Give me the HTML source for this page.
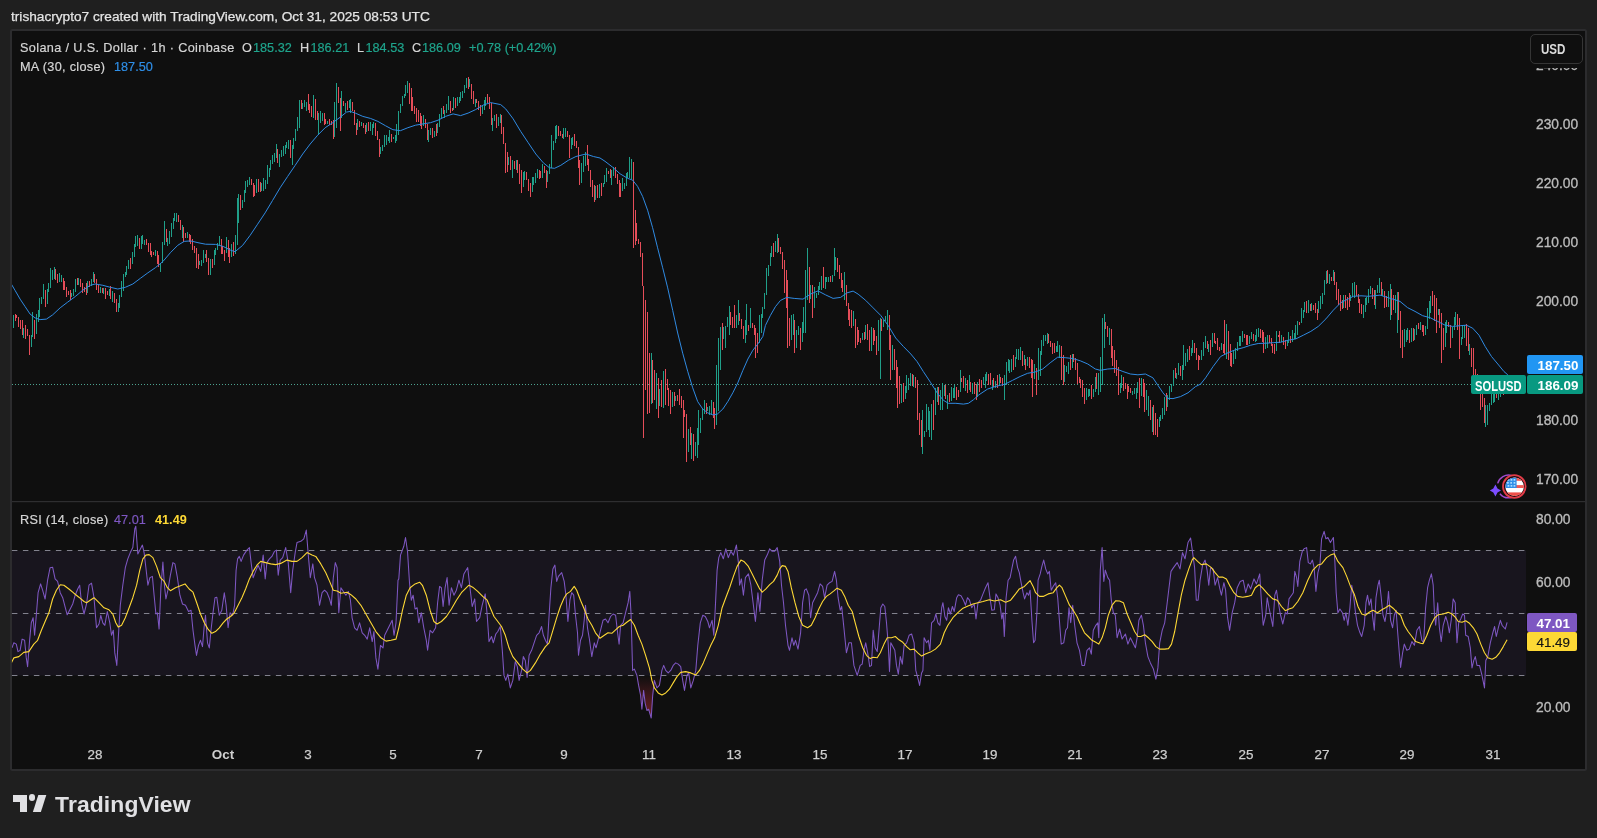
<!DOCTYPE html>
<html><head><meta charset="utf-8"><title>SOLUSD chart</title>
<style>
html,body{margin:0;padding:0}
body{width:1597px;height:838px;overflow:hidden;position:relative;background:#1f1f1f;font-family:"Liberation Sans", sans-serif;}
#chart{position:absolute;left:9.9px;top:29px;width:1573.4px;height:738.1px;border:2px solid #2c2c2e;border-radius:2.5px;background:#0f0f0f}
#t{position:absolute;left:0;top:0;width:1597px;height:838px;will-change:transform}
</style></head><body>
<div id="chart"></div>
<svg width="1597" height="838" viewBox="0 0 1597 838" style="position:absolute;left:0;top:0">
<defs><clipPath id="cm"><rect x="11.9" y="31" width="1514.1" height="470"/></clipPath><clipPath id="cr"><rect x="11.9" y="502.2" width="1514.1" height="238"/></clipPath><linearGradient id="os" gradientUnits="userSpaceOnUse" x1="0" y1="675.5" x2="0" y2="770"><stop offset="0" stop-color="#f23645" stop-opacity="0"/><stop offset="1" stop-color="#f23645" stop-opacity="1"/></linearGradient><clipPath id="below30"><rect x="11" y="676.2" width="1515" height="64"/></clipPath></defs>
<line x1="12" x2="1471" y1="384.5" y2="384.5" stroke="#58bca6" stroke-width="1" stroke-dasharray="1 2" shape-rendering="crispEdges" opacity="0.85"/>
<g clip-path="url(#cm)">
<path d="M13.5 315V328M23.5 328V338M31.5 335V347M32.5 312V337M36.5 314V334M38.5 310V322M39.5 298V317M41.5 297V304M43.5 284V299M47.5 289V304M48.5 283V292M50.5 268V288M52.5 270V280M54.5 267V279M59.5 273V282M61.5 275V282M71.5 293V297M73.5 289V296M75.5 279V292M78.5 278V285M87.5 281V293M91.5 279V286M93.5 272V282M100.5 287V293M103.5 288V294M109.5 289V296M112.5 291V302M118.5 303V312M119.5 295V308M121.5 281V297M123.5 274V291M125.5 272V277M126.5 266V275M128.5 260V269M132.5 252V264M134.5 244V257M135.5 236V247M137.5 235V246M141.5 236V249M142.5 235V244M144.5 240V245M155.5 250V256M160.5 263V272M162.5 242V263M164.5 221V245M167.5 238V246M169.5 231V244M171.5 223V237M173.5 218V229M174.5 213V221M176.5 213V222M182.5 225V238M187.5 232V238M199.5 261V265M201.5 260V266M203.5 250V263M205.5 254V258M210.5 259V275M214.5 250V265M215.5 248V255M217.5 243V250M219.5 236V245M226.5 237V253M231.5 244V257M235.5 235V254M237.5 198V245M238.5 194V223M242.5 200V208M244.5 190V202M245.5 181V193M247.5 180V187M249.5 177V185M256.5 179V193M261.5 183V191M263.5 178V191M265.5 180V189M267.5 165V184M269.5 168V177M270.5 160V170M272.5 155V164M274.5 153V162M276.5 144V158M279.5 154V167M281.5 150V157M283.5 146V156M285.5 145V154M286.5 142V148M288.5 140V149M292.5 145V165M293.5 138V149M295.5 129V141M297.5 117V131M299.5 100V128M302.5 103V109M304.5 100V107M306.5 102V111M313.5 95V118M318.5 113V135M320.5 111V123M322.5 113V121M327.5 121V124M334.5 102V137M336.5 83V128M341.5 91V118M345.5 103V112M349.5 100V108M350.5 99V113M357.5 119V130M361.5 122V126M366.5 123V132M370.5 122V131M372.5 124V135M373.5 122V128M380.5 147V154M382.5 145V151M384.5 135V147M386.5 135V145M388.5 137V141M389.5 130V143M393.5 137V139M395.5 135V143M396.5 124V141M398.5 111V135M400.5 104V113M402.5 96V106M404.5 94V98M405.5 85V96M407.5 81V93M423.5 115V126M428.5 130V142M430.5 128V135M434.5 131V137M437.5 123V133M439.5 114V127M441.5 108V118M444.5 110V118M446.5 104V113M448.5 96V110M453.5 97V110M457.5 97V106M459.5 97V103M460.5 92V101M462.5 91V98M464.5 85V93M466.5 78V88M469.5 79V87M475.5 99V107M482.5 106V114M484.5 100V110M485.5 97V106M492.5 118V131M494.5 115V121M498.5 117V126M500.5 114V123M508.5 157V165M512.5 160V178M516.5 160V170M523.5 172V187M524.5 171V180M532.5 177V192M533.5 177V185M535.5 173V183M537.5 169V178M542.5 164V178M547.5 171V182M549.5 164V174M551.5 135V168M553.5 141V150M555.5 126V143M556.5 125V139M563.5 128V139M565.5 128V137M571.5 138V149M572.5 137V145M581.5 163V183M583.5 156V172M585.5 152V166M595.5 186V200M599.5 184V198M603.5 183V187M604.5 175V184M606.5 168V182M611.5 170V185M613.5 167V176M622.5 178V191M624.5 183V189M626.5 173V186M627.5 172V178M629.5 157V178M631.5 159V179M651.5 353V404M656.5 373V409M659.5 389V406M663.5 371V408M672.5 392V407M675.5 396V401M688.5 429V452M691.5 433V459M695.5 442V456M697.5 428V458M698.5 410V445M700.5 418V433M702.5 408V420M704.5 400V414M707.5 407V411M709.5 406V415M711.5 400V415M716.5 365V425M718.5 338V411M720.5 327V370M723.5 327V339M725.5 326V348M727.5 317V327M729.5 306V335M736.5 315V328M738.5 300V325M745.5 320V343M746.5 304V335M750.5 308V328M759.5 315V343M761.5 314V333M762.5 307V318M764.5 293V309M766.5 268V295M768.5 265V276M770.5 253V266M771.5 246V257M775.5 241V252M777.5 234V253M791.5 315V340M793.5 314V335M796.5 330V348M798.5 326V335M802.5 322V342M803.5 307V333M805.5 270V333M807.5 248V300M810.5 285V299M814.5 287V308M816.5 293V298M818.5 286V295M819.5 282V290M821.5 276V290M825.5 277V289M826.5 277V282M828.5 277V282M832.5 275V282M834.5 248V276M835.5 257V270M844.5 272V300M853.5 311V326M862.5 333V340M865.5 325V339M871.5 327V351M878.5 320V351M880.5 318V379M883.5 320V327M885.5 316V321M887.5 310V330M892.5 345V370M901.5 384V403M905.5 386V399M906.5 375V393M908.5 378V390M910.5 373V386M913.5 375V387M922.5 410V454M924.5 431V437M926.5 404V432M928.5 407V430M929.5 411V437M931.5 404V440M935.5 388V415M937.5 387V402M940.5 390V410M942.5 383V410M944.5 385V396M947.5 395V409M951.5 387V401M953.5 388V398M954.5 385V398M960.5 370V392M965.5 378V391M969.5 375V390M972.5 383V394M977.5 382V397M983.5 377V385M985.5 374V388M986.5 372V381M992.5 380V390M995.5 381V388M999.5 374V385M1004.5 375V400M1006.5 362V385M1008.5 359V371M1009.5 360V373M1011.5 359V372M1015.5 357V367M1016.5 349V359M1018.5 349V360M1020.5 347V360M1024.5 355V365M1027.5 357V366M1034.5 364V379M1038.5 348V380M1040.5 351V376M1041.5 340V355M1043.5 335V346M1045.5 335V341M1047.5 333V344M1056.5 346V352M1057.5 341V352M1059.5 345V358M1064.5 365V382M1066.5 366V372M1068.5 362V374M1072.5 354V368M1086.5 388V400M1088.5 389V397M1089.5 389V396M1093.5 389V397M1095.5 377V392M1098.5 373V395M1100.5 357V392M1102.5 318V385M1104.5 314V348M1109.5 328V345M1120.5 383V393M1121.5 375V388M1132.5 391V395M1134.5 388V394M1136.5 388V399M1137.5 382V393M1141.5 378V396M1146.5 390V410M1148.5 396V416M1152.5 407V432M1159.5 417V427M1160.5 415V421M1162.5 408V419M1164.5 397V415M1167.5 395V407M1169.5 386V400M1171.5 384V392M1173.5 370V386M1176.5 373V379M1178.5 363V375M1182.5 365V380M1183.5 345V370M1185.5 353V366M1187.5 349V362M1191.5 348V356M1192.5 340V353M1201.5 350V360M1203.5 342V356M1205.5 336V348M1208.5 344V352M1212.5 333V347M1221.5 343V350M1226.5 324V359M1233.5 350V364M1235.5 348V359M1237.5 342V351M1239.5 336V346M1240.5 336V346M1242.5 331V342M1249.5 336V344M1251.5 332V339M1255.5 335V342M1256.5 329V341M1258.5 328V337M1265.5 337V349M1267.5 335V348M1276.5 331V351M1281.5 335V342M1287.5 340V346M1288.5 332V343M1292.5 330V342M1294.5 333V339M1295.5 325V339M1297.5 321V335M1301.5 308V323M1303.5 310V318M1304.5 302V312M1308.5 300V313M1311.5 303V311M1318.5 301V313M1320.5 296V309M1322.5 293V304M1324.5 280V295M1326.5 271V284M1329.5 274V284M1333.5 270V281M1343.5 295V308M1350.5 295V301M1352.5 283V297M1354.5 282V298M1363.5 305V318M1365.5 298V312M1366.5 297V305M1368.5 289V303M1370.5 286V294M1375.5 290V309M1377.5 285V293M1379.5 278V293M1382.5 289V296M1388.5 291V307M1390.5 284V320M1395.5 295V313M1397.5 292V333M1404.5 329V347M1406.5 330V342M1407.5 328V340M1411.5 328V342M1414.5 329V340M1416.5 325V335M1420.5 322V330M1425.5 326V335M1427.5 308V329M1429.5 301V319M1430.5 296V313M1438.5 309V315M1445.5 322V347M1446.5 320V333M1452.5 327V338M1454.5 317V330M1455.5 312V325M1461.5 337V345M1462.5 325V339M1464.5 325V338M1469.5 344V355M1485.5 405V427M1487.5 405V425M1489.5 403V411M1491.5 394V405M1493.5 391V403M1494.5 389V402M1498.5 391V400M1500.5 388V397M1501.5 385V393M1505.5 381V393M1507.5 383V391" stroke="#22ab94" stroke-width="1" fill="none" shape-rendering="crispEdges" opacity="0.92"/><path d="M15.5 314V321M16.5 315V318M18.5 317V327M20.5 320V329M22.5 320V335M25.5 325V339M27.5 329V336M29.5 335V355M34.5 320V339M45.5 290V307M55.5 269V280M57.5 274V283M63.5 278V290M64.5 281V290M66.5 287V297M68.5 291V295M70.5 290V300M77.5 278V285M80.5 279V287M82.5 283V293M84.5 287V292M86.5 283V295M89.5 281V287M94.5 274V283M96.5 279V290M98.5 285V293M102.5 288V293M105.5 288V299M107.5 291V295M110.5 286V299M114.5 293V303M116.5 299V312M130.5 258V269M139.5 238V249M146.5 239V245M148.5 243V252M150.5 243V255M151.5 251V257M153.5 252V255M157.5 251V264M158.5 255V267M166.5 229V242M178.5 215V222M180.5 220V230M183.5 227V242M185.5 233V238M189.5 234V242M190.5 235V244M192.5 239V250M194.5 246V253M196.5 248V268M198.5 254V269M206.5 250V262M208.5 258V275M212.5 259V268M221.5 239V254M222.5 246V254M224.5 250V261M228.5 240V257M229.5 248V263M233.5 242V256M240.5 195V210M251.5 179V185M253.5 183V197M254.5 185V196M258.5 179V192M260.5 182V192M277.5 149V163M290.5 140V158M301.5 100V109M308.5 94V110M309.5 104V113M311.5 106V117M315.5 99V120M317.5 111V120M324.5 113V125M325.5 119V124M329.5 119V125M331.5 121V125M333.5 120V139M338.5 87V103M340.5 98V131M343.5 101V106M347.5 101V110M352.5 102V111M354.5 110V125M356.5 123V135M359.5 121V127M363.5 123V128M365.5 125V134M368.5 122V131M375.5 123V136M377.5 131V140M379.5 139V157M391.5 134V142M409.5 83V104M411.5 88V111M412.5 97V111M414.5 106V114M416.5 108V122M418.5 110V122M420.5 113V126M421.5 116V129M425.5 119V128M427.5 124V140M432.5 128V138M436.5 124V136M443.5 106V114M450.5 101V113M452.5 108V111M455.5 98V108M468.5 77V89M471.5 84V99M473.5 91V104M476.5 99V103M478.5 101V110M480.5 105V116M487.5 94V103M489.5 97V109M491.5 103V125M496.5 114V128M501.5 115V134M503.5 127V144M505.5 143V173M507.5 152V172M510.5 156V170M514.5 161V169M517.5 160V173M519.5 164V184M521.5 170V193M526.5 172V180M528.5 179V191M530.5 183V197M539.5 170V179M540.5 171V178M544.5 166V173M546.5 170V188M558.5 126V136M560.5 131V136M562.5 134V138M567.5 131V137M569.5 135V158M574.5 134V146M576.5 141V148M578.5 147V168M579.5 160V185M587.5 145V165M588.5 159V171M590.5 170V187M592.5 180V197M594.5 185V202M597.5 185V198M601.5 183V196M608.5 171V174M610.5 169V178M615.5 167V178M617.5 174V184M619.5 180V197M620.5 183V197M633.5 162V248M635.5 210V245M636.5 223V241M638.5 239V244M640.5 242V257M642.5 253V286M643.5 286V438M645.5 300V390M647.5 312V414M649.5 353V413M652.5 360V403M654.5 370V400M658.5 378V418M661.5 380V407M665.5 369V405M667.5 379V390M668.5 388V406M670.5 390V414M674.5 392V406M677.5 395V401M679.5 389V405M681.5 396V408M683.5 400V438M684.5 410V417M686.5 414V462M690.5 427V445M693.5 434V461M706.5 403V414M713.5 402V418M714.5 408V429M722.5 323V350M730.5 312V325M732.5 317V328M734.5 305V328M739.5 313V321M741.5 319V329M743.5 326V339M748.5 325V331M752.5 323V328M754.5 325V335M755.5 328V358M757.5 333V353M773.5 243V257M778.5 238V252M780.5 247V254M782.5 252V269M784.5 260V293M786.5 270V308M787.5 280V348M789.5 318V346M794.5 320V353M800.5 328V350M809.5 267V303M812.5 285V318M823.5 267V288M830.5 276V282M837.5 258V272M839.5 265V279M841.5 273V288M842.5 280V292M846.5 285V306M848.5 303V320M849.5 309V326M851.5 310V328M855.5 319V348M857.5 327V345M858.5 330V342M860.5 338V343M864.5 332V340M867.5 324V340M869.5 330V351M873.5 328V345M874.5 330V341M876.5 336V355M881.5 319V331M889.5 315V350M890.5 335V380M894.5 349V370M896.5 360V388M897.5 367V408M899.5 376V404M903.5 383V402M912.5 374V386M915.5 377V388M917.5 380V420M919.5 413V435M921.5 420V447M933.5 400V430M938.5 387V405M945.5 385V399M949.5 393V402M956.5 387V400M958.5 390V397M961.5 378V382M963.5 376V388M967.5 380V393M970.5 382V392M974.5 382V394M976.5 384V400M979.5 379V392M981.5 380V388M988.5 374V385M990.5 373V385M993.5 378V387M997.5 375V388M1000.5 377V383M1002.5 378V386M1013.5 355V370M1022.5 351V366M1025.5 359V370M1029.5 357V368M1031.5 359V378M1032.5 360V397M1036.5 368V395M1048.5 334V343M1050.5 341V347M1052.5 343V354M1054.5 343V353M1061.5 346V380M1063.5 355V385M1070.5 355V370M1073.5 354V362M1075.5 358V370M1077.5 363V384M1079.5 377V383M1080.5 379V388M1082.5 380V397M1084.5 388V404M1091.5 385V399M1096.5 373V389M1105.5 322V329M1107.5 326V337M1111.5 329V358M1112.5 346V366M1114.5 350V373M1116.5 360V376M1118.5 367V395M1123.5 377V391M1125.5 383V389M1127.5 384V399M1128.5 386V392M1130.5 388V393M1139.5 378V408M1143.5 379V397M1144.5 383V412M1150.5 400V420M1153.5 405V435M1155.5 413V435M1157.5 419V437M1166.5 393V411M1175.5 368V378M1180.5 366V376M1189.5 346V360M1194.5 343V353M1196.5 348V360M1198.5 355V370M1199.5 356V360M1207.5 341V349M1210.5 340V355M1214.5 333V343M1215.5 341V344M1217.5 338V350M1219.5 347V351M1223.5 344V353M1224.5 320V355M1228.5 331V360M1230.5 344V366M1231.5 353V367M1244.5 334V338M1246.5 335V345M1247.5 335V345M1253.5 334V341M1260.5 329V338M1262.5 330V342M1263.5 332V353M1269.5 335V343M1271.5 338V346M1272.5 344V353M1274.5 344V354M1278.5 335V337M1279.5 331V343M1283.5 337V345M1285.5 340V349M1290.5 336V343M1299.5 322V325M1306.5 301V313M1310.5 304V311M1313.5 305V310M1315.5 303V313M1317.5 309V320M1327.5 270V283M1331.5 277V281M1334.5 272V285M1336.5 282V300M1338.5 289V305M1340.5 295V311M1342.5 300V309M1345.5 295V308M1347.5 297V310M1349.5 293V307M1356.5 285V296M1358.5 294V303M1359.5 299V313M1361.5 304V314M1372.5 288V299M1374.5 290V305M1381.5 282V296M1384.5 291V308M1386.5 296V307M1391.5 289V315M1393.5 295V310M1398.5 292V320M1400.5 311V348M1402.5 330V358M1409.5 330V343M1413.5 328V341M1418.5 323V329M1422.5 325V332M1423.5 325V336M1432.5 291V306M1434.5 295V321M1436.5 298V333M1439.5 309V328M1441.5 313V363M1443.5 328V350M1448.5 322V327M1450.5 325V348M1457.5 314V330M1459.5 318V359M1466.5 324V346M1468.5 328V351M1471.5 348V367M1473.5 348V375M1475.5 369V379M1477.5 374V382M1478.5 380V393M1480.5 391V410M1482.5 394V407M1484.5 398V423M1496.5 394V398M1503.5 385V395" stroke="#f7525f" stroke-width="1" fill="none" shape-rendering="crispEdges" opacity="0.92"/>
<path d="M11.3 284.0L15.0 290.3L20.1 299.1L25.1 306.6L30.1 314.1L35.1 317.9L40.1 319.6L46.4 319.1L52.6 314.9L60.2 307.8L67.7 302.1L75.2 296.6L82.7 290.3L90.2 285.3L95.2 284.0L102.8 285.3L110.3 287.3L117.8 289.0L125.3 287.3L132.8 284.0L140.4 278.3L147.9 272.8L155.4 267.7L162.9 261.5L170.4 252.7L177.9 245.2L184.2 241.4L190.5 240.9L198.0 242.7L205.5 244.2L215.5 244.4L223.1 246.4L230.6 250.2L235.0 251.7L242.5 245.5L250.1 235.4L257.6 224.2L265.1 212.9L272.6 200.4L280.1 187.8L287.6 176.5L295.2 165.3L302.7 154.0L310.2 144.0L317.7 135.2L325.2 127.7L332.8 122.7L340.3 117.1L346.5 112.1L350.3 111.4L355.3 113.1L362.8 116.4L370.4 118.4L377.9 121.4L385.4 125.7L392.9 129.7L400.4 130.7L407.9 127.7L415.5 125.2L423.0 123.9L430.5 122.7L438.0 120.2L445.5 116.4L453.1 113.9L460.6 115.6L468.1 113.1L475.6 109.6L483.1 105.1L490.7 102.6L500.7 104.6L505.7 108.9L513.2 118.9L520.7 131.4L528.2 142.7L535.8 154.0L543.3 162.8L549.5 167.8L554.6 168.3L560.8 165.3L568.3 160.3L575.9 156.5L585.9 154.0L593.4 156.5L600.0 158.0L605.0 161.3L612.5 167.1L620.1 173.8L627.6 178.3L632.6 180.1L637.6 186.4L642.6 196.4L647.6 210.2L652.6 227.7L657.6 247.8L662.7 267.8L667.7 287.9L672.7 310.4L677.7 333.0L682.7 353.2L687.7 371.3L692.7 387.8L697.7 401.6L702.8 409.1L707.8 412.9L712.8 414.9L717.3 414.1L722.8 409.1L727.8 401.6L732.8 392.8L737.8 382.8L742.9 370.3L747.9 359.0L752.9 350.2L757.9 343.9L762.9 336.4L765.4 325.5L770.4 315.4L775.4 306.7L780.5 300.4L786.7 297.4L794.2 298.4L803.0 299.1L810.5 294.1L818.0 290.9L825.6 294.9L833.1 298.4L840.6 297.4L846.9 292.9L853.1 291.1L858.1 294.1L865.7 300.4L873.2 307.9L880.7 315.4L888.2 325.5L895.7 338.0L903.3 346.4L910.8 354.0L917.0 361.5L923.3 371.5L930.8 382.8L937.1 392.8L943.4 400.3L948.4 403.3L955.9 403.3L963.4 404.1L968.4 403.3L973.4 399.8L978.4 395.3L980.0 394.1L987.5 389.1L995.0 386.6L1005.1 384.1L1012.6 380.3L1020.1 376.5L1027.6 373.3L1035.1 372.0L1042.7 369.0L1050.2 362.8L1057.7 357.2L1065.2 357.7L1072.7 358.5L1080.3 360.8L1087.8 364.0L1095.3 369.0L1100.3 370.3L1107.8 369.0L1115.3 368.5L1122.9 371.5L1130.4 374.0L1137.9 374.8L1145.4 374.0L1152.9 377.8L1157.9 385.3L1163.0 392.8L1167.5 398.3L1173.0 398.6L1180.5 396.6L1188.0 392.8L1195.5 386.6L1200.6 384.1L1205.6 377.8L1213.1 366.5L1220.6 356.5L1228.1 352.7L1235.6 349.7L1243.2 347.7L1250.7 345.2L1258.2 343.5L1265.7 343.2L1273.2 342.7L1280.8 342.2L1288.3 340.2L1295.8 338.9L1303.3 335.2L1310.8 331.4L1318.3 326.4L1325.9 318.9L1333.4 310.1L1340.9 302.6L1348.4 298.8L1353.4 296.3L1361.0 295.8L1368.5 296.3L1376.0 295.6L1380.0 295.1L1400.0 301.4L1407.5 307.6L1415.0 311.4L1422.6 315.7L1430.1 317.7L1437.6 321.4L1445.1 325.2L1452.6 326.4L1460.2 325.7L1466.4 325.2L1472.7 328.2L1479.0 335.2L1485.2 346.5L1491.5 356.5L1497.8 364.0L1504.0 371.6L1507.8 374.8" stroke="#2f8ae2" stroke-width="1" fill="none" stroke-linejoin="round"/>
</g>
<rect x="11.9" y="501" width="1573.4" height="1.2" fill="#2e2e30"/>
<rect x="11.9" y="550.5" width="1514.1" height="125" fill="#7e57c2" fill-opacity="0.09"/>
<line x1="11.9" x2="1526" y1="550.5" y2="550.5" stroke="#82828e" stroke-width="1" stroke-dasharray="5.5 5.5"/>
<line x1="11.9" x2="1526" y1="613.5" y2="613.5" stroke="#82828e" stroke-width="1" stroke-dasharray="5.5 5.5"/>
<line x1="11.9" x2="1526" y1="675.5" y2="675.5" stroke="#82828e" stroke-width="1" stroke-dasharray="5.5 5.5"/>
<g clip-path="url(#cr)">
<g clip-path="url(#below30)"><path d="M12.0 647.9L13.8 642.8L16.3 644.1L18.0 651.6L20.1 650.4L22.1 639.1L24.6 640.3L26.3 657.9L27.6 666.7L29.6 640.3L31.3 622.8L33.1 617.8L34.6 635.3L36.3 615.3L38.1 592.7L40.6 583.9L42.6 590.2L45.1 599.0L47.6 580.2L50.1 567.7L52.6 567.2L55.1 578.9L57.6 581.4L60.2 592.7L62.7 597.7L64.7 605.3L67.2 614.8L70.2 609.0L72.7 604.0L75.2 595.2L77.7 589.0L79.7 585.2L81.5 602.7L84.0 614.0L86.5 604.0L89.0 585.2L91.5 583.2L94.0 597.7L96.5 627.8L99.0 624.0L100.8 615.3L102.8 622.8L104.8 625.3L107.3 611.5L109.8 622.8L111.5 635.3L113.3 630.3L114.8 652.9L116.8 665.4L118.3 637.8L120.3 605.3L122.8 585.2L125.3 567.7L127.8 558.9L130.3 552.6L132.8 547.6L134.8 528.8L135.8 526.3L137.8 553.9L140.4 548.9L142.4 545.1L144.1 552.6L145.9 567.7L147.9 585.2L149.9 577.7L152.4 576.4L154.1 595.2L155.9 614.0L157.4 612.8L159.1 629.1L160.9 587.7L162.9 562.1L164.4 585.2L165.9 599.0L167.9 590.2L170.4 575.2L172.9 562.6L174.9 563.9L177.4 577.7L179.9 595.2L182.5 604.0L185.5 605.3L188.5 611.5L191.0 610.3L193.0 630.3L195.0 645.4L196.5 655.4L198.5 645.4L200.5 640.3L202.5 646.6L204.3 625.3L205.5 615.3L207.5 642.8L209.3 647.9L211.0 630.3L213.0 612.8L215.0 597.7L216.8 597.2L219.3 615.3L221.8 610.3L224.3 592.7L226.1 605.3L228.1 627.8L230.1 612.8L232.6 615.3L234.6 605.3L236.1 570.2L237.6 558.9L239.3 556.4L241.1 561.4L243.6 555.1L246.9 550.1L249.4 547.6L251.1 562.6L253.1 577.7L255.6 571.4L258.1 565.2L260.7 571.4L263.2 555.1L265.2 578.9L266.9 562.6L269.4 558.9L271.9 556.4L274.4 551.4L276.4 550.1L278.2 575.2L280.2 560.1L282.7 557.6L285.7 547.6L288.2 562.6L290.7 592.7L292.7 570.2L295.2 552.6L297.0 542.6L300.8 541.3L303.8 538.8L306.3 530.1L308.3 555.1L310.3 577.7L312.8 563.9L314.5 577.7L317.0 585.2L319.5 605.3L322.1 592.7L324.6 590.2L327.1 592.7L329.6 599.0L331.3 605.3L333.3 577.7L335.3 562.6L337.1 567.7L338.8 612.8L340.9 587.7L343.4 591.5L345.9 595.2L348.4 591.5L350.4 600.2L352.1 617.8L354.6 627.8L357.1 630.3L359.6 622.8L362.2 632.8L364.7 635.3L367.2 639.1L369.7 627.8L372.2 641.6L373.9 631.6L375.9 657.9L377.9 669.2L380.5 645.4L383.0 647.9L384.7 635.3L387.2 630.3L389.7 625.3L392.2 620.3L394.0 635.3L396.0 622.8L398.0 580.2L398.8 578.9L400.5 555.1L403.8 546.3L405.5 537.5L407.5 551.3L409.5 582.7L411.3 600.2L413.1 595.2L415.1 609.0L417.1 607.7L418.8 622.8L421.3 612.7L423.8 627.8L426.3 640.3L427.6 650.3L430.1 630.3L432.6 632.8L435.6 627.8L437.6 602.7L439.6 586.4L441.4 587.7L443.1 606.5L445.1 587.7L447.1 577.6L449.1 605.2L451.4 587.7L453.9 595.2L456.4 590.2L458.9 580.2L461.4 587.7L463.9 573.9L467.7 567.6L469.7 585.2L472.2 606.5L474.7 598.9L476.5 621.5L479.7 617.7L482.2 605.2L485.2 593.9L487.2 615.2L489.0 641.6L491.5 636.5L493.3 642.8L495.8 634.0L497.8 631.5L500.3 626.5L502.3 650.3L504.0 675.4L505.8 680.4L507.8 674.1L510.3 687.9L512.8 680.4L515.3 661.6L517.3 666.6L519.1 680.4L521.6 670.4L523.3 656.6L525.3 660.4L527.1 677.4L529.1 655.3L531.6 650.3L534.1 642.8L536.6 635.3L539.1 632.8L541.6 626.5L543.4 635.3L545.4 640.3L547.4 644.1L549.1 615.2L550.9 587.7L552.9 568.9L554.9 565.1L556.7 581.4L558.4 576.4L561.7 572.6L564.2 581.4L565.9 595.2L567.9 621.5L569.9 600.2L571.7 592.7L573.7 595.2L575.5 615.2L577.5 632.8L578.5 655.3L580.5 640.3L582.5 635.3L584.2 620.3L585.5 605.2L587.5 627.8L589.2 637.8L591.8 656.6L594.3 642.8L596.0 647.8L598.0 640.3L600.5 630.3L603.0 620.3L605.5 619.0L608.0 622.8L610.6 616.5L613.1 614.0L615.6 615.2L617.6 632.8L619.1 644.1L620.6 625.3L623.1 622.8L625.6 612.7L628.1 602.7L629.8 591.4L631.1 615.2L632.6 670.4L634.4 669.1L636.9 675.4L638.6 685.4L640.6 695.4L641.9 709.2L643.6 690.4L645.1 703.0L646.9 710.5L648.6 709.2L651.2 718.0L652.7 695.4L654.4 680.4L656.9 687.9L659.4 685.4L661.9 670.4L663.7 665.4L665.7 670.4L668.2 672.9L670.7 670.4L673.2 665.4L675.7 662.9L678.2 664.1L680.7 666.6L682.7 680.4L684.5 690.4L687.0 675.4L688.7 672.9L690.8 687.9L693.3 680.4L695.8 670.4L697.8 645.3L700.3 622.8L702.8 615.2L705.3 616.5L707.8 621.5L709.5 627.8L712.1 620.3L713.8 635.3L715.3 607.7L717.1 570.1L718.8 557.6L720.8 552.6L723.3 558.8L725.8 548.8L728.3 557.6L730.9 551.3L733.4 555.1L736.4 545.1L738.4 562.6L739.6 585.2L741.4 578.9L743.4 595.2L745.4 577.6L748.4 573.9L750.9 585.2L753.4 605.2L755.4 621.5L757.9 592.7L759.9 611.5L762.2 580.2L764.7 560.1L767.2 555.1L769.7 548.8L772.2 551.3L774.7 551.3L777.2 547.6L779.7 561.4L781.5 585.2L783.5 602.7L785.5 625.3L788.0 645.3L789.5 650.3L792.0 637.8L793.8 645.3L795.5 640.3L798.0 649.1L800.6 632.8L802.6 602.7L804.6 590.2L806.3 588.9L808.8 595.2L810.6 617.7L812.6 602.7L815.1 597.7L817.6 592.7L820.1 583.9L822.6 586.4L824.6 597.7L827.1 585.2L829.6 582.7L832.1 581.4L834.6 571.4L836.4 580.2L838.1 597.7L840.2 610.2L841.7 606.5L843.9 627.8L846.4 652.8L848.9 642.8L851.4 642.8L853.9 665.4L857.2 675.4L860.2 665.4L862.2 664.1L864.0 650.3L865.7 642.8L867.7 652.8L869.7 666.6L871.5 665.4L873.2 630.3L875.2 647.8L877.2 651.6L879.0 630.3L880.8 607.7L882.8 604.0L884.8 606.5L886.5 622.8L888.3 645.3L889.5 671.6L890.8 642.8L892.8 646.6L894.8 650.3L896.5 665.4L898.3 674.1L900.3 656.6L902.3 664.1L904.1 645.3L906.6 642.8L909.1 635.3L911.6 634.0L914.1 642.8L915.8 670.4L917.8 677.9L919.6 685.4L921.6 672.9L922.9 670.4L924.1 637.8L926.6 642.8L928.4 640.3L929.9 650.3L931.6 622.8L934.1 620.3L935.9 614.0L937.9 622.8L939.9 625.3L941.7 607.7L942.9 602.7L944.9 616.5L946.7 620.3L948.4 607.7L950.4 614.0L952.4 606.5L954.2 611.5L956.7 597.7L958.4 594.7L961.0 595.7L963.5 600.2L965.5 605.2L967.5 597.7L969.5 600.2L971.7 607.7L974.2 604.0L976.0 619.0L978.0 602.7L980.5 600.2L983.0 593.9L985.5 587.7L988.0 582.7L990.0 597.7L991.8 610.2L994.3 609.7L996.0 593.9L998.0 597.7L1000.1 605.2L1001.8 619.0L1003.1 612.7L1004.3 636.5L1006.1 597.7L1008.1 580.2L1010.1 577.6L1011.8 568.9L1013.6 560.1L1015.6 556.3L1017.6 567.6L1019.3 572.6L1021.1 582.7L1023.1 592.7L1024.6 598.9L1026.9 592.7L1028.6 595.2L1030.1 590.2L1031.9 620.3L1033.6 642.8L1035.1 640.3L1036.9 612.7L1038.1 580.2L1040.2 573.9L1041.9 566.4L1043.7 560.1L1045.7 568.9L1047.7 573.9L1049.4 571.4L1051.2 590.2L1053.2 586.4L1055.7 582.7L1057.7 597.7L1059.4 620.3L1061.2 644.1L1063.7 642.8L1065.7 630.3L1067.5 627.8L1069.0 607.7L1070.7 622.8L1072.7 605.2L1074.5 624.0L1077.0 642.8L1079.5 650.3L1082.0 665.4L1084.5 665.4L1087.0 650.3L1089.5 647.8L1091.3 654.1L1093.3 630.3L1095.8 625.3L1097.8 622.8L1098.8 637.8L1100.3 570.1L1102.1 547.6L1103.8 581.4L1105.3 570.1L1107.8 577.6L1109.6 580.2L1111.3 600.2L1113.3 612.7L1115.3 615.2L1117.1 637.8L1119.6 629.0L1122.1 639.0L1125.4 634.0L1127.9 644.1L1130.4 637.8L1132.9 642.8L1135.4 647.8L1137.1 637.8L1138.9 620.3L1141.4 615.2L1143.4 625.3L1145.4 642.8L1147.9 656.6L1150.4 662.9L1153.4 669.1L1155.9 679.1L1157.9 667.9L1159.7 642.8L1162.2 630.3L1164.7 622.8L1167.2 602.7L1169.0 587.7L1171.0 571.4L1173.5 567.6L1177.2 562.6L1180.0 568.9L1182.5 552.6L1185.0 558.8L1188.0 542.6L1190.6 538.0L1192.6 552.6L1194.6 567.6L1196.3 600.2L1198.1 600.2L1200.1 580.2L1202.6 565.1L1205.1 560.1L1207.1 570.1L1208.8 585.2L1210.6 567.6L1213.1 568.9L1215.1 585.2L1217.6 577.6L1219.6 587.7L1221.4 595.2L1223.9 582.7L1225.6 590.2L1227.6 617.7L1229.6 630.3L1232.2 612.7L1234.7 602.7L1237.2 587.7L1240.2 581.4L1243.2 580.2L1245.7 592.7L1248.2 583.9L1250.7 588.9L1254.0 578.9L1256.5 583.9L1259.7 573.9L1261.5 602.7L1263.2 625.3L1265.7 615.2L1267.2 597.7L1269.0 607.7L1270.8 616.5L1272.8 626.5L1274.8 595.2L1276.5 590.2L1278.3 602.7L1280.3 614.0L1282.8 624.0L1285.3 612.7L1287.3 614.0L1289.0 598.9L1291.6 595.2L1293.3 592.7L1294.8 571.4L1296.6 577.6L1297.8 586.4L1299.8 561.4L1302.3 551.3L1304.1 548.8L1306.6 547.6L1308.3 562.6L1310.4 563.9L1312.4 560.1L1314.1 567.6L1315.9 591.4L1317.9 572.6L1319.9 565.1L1321.6 538.8L1324.1 531.3L1325.9 538.8L1327.9 537.5L1330.4 542.6L1333.4 537.5L1334.9 562.6L1336.2 592.7L1337.9 612.7L1339.9 609.0L1342.4 612.7L1344.2 620.3L1345.9 612.7L1347.9 625.3L1349.9 607.7L1351.7 585.2L1353.5 595.2L1355.5 612.7L1357.5 625.3L1360.0 632.8L1361.7 636.5L1364.2 625.3L1366.0 602.7L1367.5 595.2L1369.2 605.2L1371.0 598.9L1372.5 615.2L1374.3 630.3L1376.0 597.7L1378.0 585.2L1379.3 580.2L1381.0 595.2L1383.0 615.2L1385.0 621.5L1386.8 610.2L1388.5 591.4L1390.6 620.3L1392.6 627.8L1394.3 615.2L1396.1 610.2L1397.6 631.5L1399.3 652.8L1400.6 667.4L1402.6 652.8L1404.3 644.1L1406.8 650.3L1409.3 649.1L1411.9 641.6L1414.4 645.3L1416.9 630.3L1419.4 626.5L1421.9 640.3L1423.6 642.8L1425.6 607.7L1427.6 587.7L1429.4 580.2L1431.4 573.9L1433.2 585.2L1434.4 612.7L1435.7 625.3L1437.7 602.7L1439.4 627.8L1441.2 641.6L1443.2 625.3L1445.7 616.5L1447.7 622.8L1449.4 632.8L1451.2 620.3L1453.2 598.9L1455.2 602.7L1457.0 642.8L1458.7 622.8L1460.7 619.0L1462.7 614.0L1464.5 615.2L1465.7 635.3L1468.2 636.5L1470.3 647.8L1472.0 667.9L1473.8 660.4L1475.3 656.6L1477.0 665.4L1479.5 665.4L1482.0 675.4L1484.5 687.9L1485.8 660.4L1487.8 656.6L1490.3 642.8L1492.8 632.8L1494.6 626.5L1496.3 636.5L1498.3 627.8L1500.3 620.3L1502.1 625.3L1505.3 629.0L1507.1 622.3L1507.1 675.5L12.0 675.5Z" fill="url(#os)" stroke="none"/></g>
<path d="M12.0 647.9L13.8 642.8L16.3 644.1L18.0 651.6L20.1 650.4L22.1 639.1L24.6 640.3L26.3 657.9L27.6 666.7L29.6 640.3L31.3 622.8L33.1 617.8L34.6 635.3L36.3 615.3L38.1 592.7L40.6 583.9L42.6 590.2L45.1 599.0L47.6 580.2L50.1 567.7L52.6 567.2L55.1 578.9L57.6 581.4L60.2 592.7L62.7 597.7L64.7 605.3L67.2 614.8L70.2 609.0L72.7 604.0L75.2 595.2L77.7 589.0L79.7 585.2L81.5 602.7L84.0 614.0L86.5 604.0L89.0 585.2L91.5 583.2L94.0 597.7L96.5 627.8L99.0 624.0L100.8 615.3L102.8 622.8L104.8 625.3L107.3 611.5L109.8 622.8L111.5 635.3L113.3 630.3L114.8 652.9L116.8 665.4L118.3 637.8L120.3 605.3L122.8 585.2L125.3 567.7L127.8 558.9L130.3 552.6L132.8 547.6L134.8 528.8L135.8 526.3L137.8 553.9L140.4 548.9L142.4 545.1L144.1 552.6L145.9 567.7L147.9 585.2L149.9 577.7L152.4 576.4L154.1 595.2L155.9 614.0L157.4 612.8L159.1 629.1L160.9 587.7L162.9 562.1L164.4 585.2L165.9 599.0L167.9 590.2L170.4 575.2L172.9 562.6L174.9 563.9L177.4 577.7L179.9 595.2L182.5 604.0L185.5 605.3L188.5 611.5L191.0 610.3L193.0 630.3L195.0 645.4L196.5 655.4L198.5 645.4L200.5 640.3L202.5 646.6L204.3 625.3L205.5 615.3L207.5 642.8L209.3 647.9L211.0 630.3L213.0 612.8L215.0 597.7L216.8 597.2L219.3 615.3L221.8 610.3L224.3 592.7L226.1 605.3L228.1 627.8L230.1 612.8L232.6 615.3L234.6 605.3L236.1 570.2L237.6 558.9L239.3 556.4L241.1 561.4L243.6 555.1L246.9 550.1L249.4 547.6L251.1 562.6L253.1 577.7L255.6 571.4L258.1 565.2L260.7 571.4L263.2 555.1L265.2 578.9L266.9 562.6L269.4 558.9L271.9 556.4L274.4 551.4L276.4 550.1L278.2 575.2L280.2 560.1L282.7 557.6L285.7 547.6L288.2 562.6L290.7 592.7L292.7 570.2L295.2 552.6L297.0 542.6L300.8 541.3L303.8 538.8L306.3 530.1L308.3 555.1L310.3 577.7L312.8 563.9L314.5 577.7L317.0 585.2L319.5 605.3L322.1 592.7L324.6 590.2L327.1 592.7L329.6 599.0L331.3 605.3L333.3 577.7L335.3 562.6L337.1 567.7L338.8 612.8L340.9 587.7L343.4 591.5L345.9 595.2L348.4 591.5L350.4 600.2L352.1 617.8L354.6 627.8L357.1 630.3L359.6 622.8L362.2 632.8L364.7 635.3L367.2 639.1L369.7 627.8L372.2 641.6L373.9 631.6L375.9 657.9L377.9 669.2L380.5 645.4L383.0 647.9L384.7 635.3L387.2 630.3L389.7 625.3L392.2 620.3L394.0 635.3L396.0 622.8L398.0 580.2L398.8 578.9L400.5 555.1L403.8 546.3L405.5 537.5L407.5 551.3L409.5 582.7L411.3 600.2L413.1 595.2L415.1 609.0L417.1 607.7L418.8 622.8L421.3 612.7L423.8 627.8L426.3 640.3L427.6 650.3L430.1 630.3L432.6 632.8L435.6 627.8L437.6 602.7L439.6 586.4L441.4 587.7L443.1 606.5L445.1 587.7L447.1 577.6L449.1 605.2L451.4 587.7L453.9 595.2L456.4 590.2L458.9 580.2L461.4 587.7L463.9 573.9L467.7 567.6L469.7 585.2L472.2 606.5L474.7 598.9L476.5 621.5L479.7 617.7L482.2 605.2L485.2 593.9L487.2 615.2L489.0 641.6L491.5 636.5L493.3 642.8L495.8 634.0L497.8 631.5L500.3 626.5L502.3 650.3L504.0 675.4L505.8 680.4L507.8 674.1L510.3 687.9L512.8 680.4L515.3 661.6L517.3 666.6L519.1 680.4L521.6 670.4L523.3 656.6L525.3 660.4L527.1 677.4L529.1 655.3L531.6 650.3L534.1 642.8L536.6 635.3L539.1 632.8L541.6 626.5L543.4 635.3L545.4 640.3L547.4 644.1L549.1 615.2L550.9 587.7L552.9 568.9L554.9 565.1L556.7 581.4L558.4 576.4L561.7 572.6L564.2 581.4L565.9 595.2L567.9 621.5L569.9 600.2L571.7 592.7L573.7 595.2L575.5 615.2L577.5 632.8L578.5 655.3L580.5 640.3L582.5 635.3L584.2 620.3L585.5 605.2L587.5 627.8L589.2 637.8L591.8 656.6L594.3 642.8L596.0 647.8L598.0 640.3L600.5 630.3L603.0 620.3L605.5 619.0L608.0 622.8L610.6 616.5L613.1 614.0L615.6 615.2L617.6 632.8L619.1 644.1L620.6 625.3L623.1 622.8L625.6 612.7L628.1 602.7L629.8 591.4L631.1 615.2L632.6 670.4L634.4 669.1L636.9 675.4L638.6 685.4L640.6 695.4L641.9 709.2L643.6 690.4L645.1 703.0L646.9 710.5L648.6 709.2L651.2 718.0L652.7 695.4L654.4 680.4L656.9 687.9L659.4 685.4L661.9 670.4L663.7 665.4L665.7 670.4L668.2 672.9L670.7 670.4L673.2 665.4L675.7 662.9L678.2 664.1L680.7 666.6L682.7 680.4L684.5 690.4L687.0 675.4L688.7 672.9L690.8 687.9L693.3 680.4L695.8 670.4L697.8 645.3L700.3 622.8L702.8 615.2L705.3 616.5L707.8 621.5L709.5 627.8L712.1 620.3L713.8 635.3L715.3 607.7L717.1 570.1L718.8 557.6L720.8 552.6L723.3 558.8L725.8 548.8L728.3 557.6L730.9 551.3L733.4 555.1L736.4 545.1L738.4 562.6L739.6 585.2L741.4 578.9L743.4 595.2L745.4 577.6L748.4 573.9L750.9 585.2L753.4 605.2L755.4 621.5L757.9 592.7L759.9 611.5L762.2 580.2L764.7 560.1L767.2 555.1L769.7 548.8L772.2 551.3L774.7 551.3L777.2 547.6L779.7 561.4L781.5 585.2L783.5 602.7L785.5 625.3L788.0 645.3L789.5 650.3L792.0 637.8L793.8 645.3L795.5 640.3L798.0 649.1L800.6 632.8L802.6 602.7L804.6 590.2L806.3 588.9L808.8 595.2L810.6 617.7L812.6 602.7L815.1 597.7L817.6 592.7L820.1 583.9L822.6 586.4L824.6 597.7L827.1 585.2L829.6 582.7L832.1 581.4L834.6 571.4L836.4 580.2L838.1 597.7L840.2 610.2L841.7 606.5L843.9 627.8L846.4 652.8L848.9 642.8L851.4 642.8L853.9 665.4L857.2 675.4L860.2 665.4L862.2 664.1L864.0 650.3L865.7 642.8L867.7 652.8L869.7 666.6L871.5 665.4L873.2 630.3L875.2 647.8L877.2 651.6L879.0 630.3L880.8 607.7L882.8 604.0L884.8 606.5L886.5 622.8L888.3 645.3L889.5 671.6L890.8 642.8L892.8 646.6L894.8 650.3L896.5 665.4L898.3 674.1L900.3 656.6L902.3 664.1L904.1 645.3L906.6 642.8L909.1 635.3L911.6 634.0L914.1 642.8L915.8 670.4L917.8 677.9L919.6 685.4L921.6 672.9L922.9 670.4L924.1 637.8L926.6 642.8L928.4 640.3L929.9 650.3L931.6 622.8L934.1 620.3L935.9 614.0L937.9 622.8L939.9 625.3L941.7 607.7L942.9 602.7L944.9 616.5L946.7 620.3L948.4 607.7L950.4 614.0L952.4 606.5L954.2 611.5L956.7 597.7L958.4 594.7L961.0 595.7L963.5 600.2L965.5 605.2L967.5 597.7L969.5 600.2L971.7 607.7L974.2 604.0L976.0 619.0L978.0 602.7L980.5 600.2L983.0 593.9L985.5 587.7L988.0 582.7L990.0 597.7L991.8 610.2L994.3 609.7L996.0 593.9L998.0 597.7L1000.1 605.2L1001.8 619.0L1003.1 612.7L1004.3 636.5L1006.1 597.7L1008.1 580.2L1010.1 577.6L1011.8 568.9L1013.6 560.1L1015.6 556.3L1017.6 567.6L1019.3 572.6L1021.1 582.7L1023.1 592.7L1024.6 598.9L1026.9 592.7L1028.6 595.2L1030.1 590.2L1031.9 620.3L1033.6 642.8L1035.1 640.3L1036.9 612.7L1038.1 580.2L1040.2 573.9L1041.9 566.4L1043.7 560.1L1045.7 568.9L1047.7 573.9L1049.4 571.4L1051.2 590.2L1053.2 586.4L1055.7 582.7L1057.7 597.7L1059.4 620.3L1061.2 644.1L1063.7 642.8L1065.7 630.3L1067.5 627.8L1069.0 607.7L1070.7 622.8L1072.7 605.2L1074.5 624.0L1077.0 642.8L1079.5 650.3L1082.0 665.4L1084.5 665.4L1087.0 650.3L1089.5 647.8L1091.3 654.1L1093.3 630.3L1095.8 625.3L1097.8 622.8L1098.8 637.8L1100.3 570.1L1102.1 547.6L1103.8 581.4L1105.3 570.1L1107.8 577.6L1109.6 580.2L1111.3 600.2L1113.3 612.7L1115.3 615.2L1117.1 637.8L1119.6 629.0L1122.1 639.0L1125.4 634.0L1127.9 644.1L1130.4 637.8L1132.9 642.8L1135.4 647.8L1137.1 637.8L1138.9 620.3L1141.4 615.2L1143.4 625.3L1145.4 642.8L1147.9 656.6L1150.4 662.9L1153.4 669.1L1155.9 679.1L1157.9 667.9L1159.7 642.8L1162.2 630.3L1164.7 622.8L1167.2 602.7L1169.0 587.7L1171.0 571.4L1173.5 567.6L1177.2 562.6L1180.0 568.9L1182.5 552.6L1185.0 558.8L1188.0 542.6L1190.6 538.0L1192.6 552.6L1194.6 567.6L1196.3 600.2L1198.1 600.2L1200.1 580.2L1202.6 565.1L1205.1 560.1L1207.1 570.1L1208.8 585.2L1210.6 567.6L1213.1 568.9L1215.1 585.2L1217.6 577.6L1219.6 587.7L1221.4 595.2L1223.9 582.7L1225.6 590.2L1227.6 617.7L1229.6 630.3L1232.2 612.7L1234.7 602.7L1237.2 587.7L1240.2 581.4L1243.2 580.2L1245.7 592.7L1248.2 583.9L1250.7 588.9L1254.0 578.9L1256.5 583.9L1259.7 573.9L1261.5 602.7L1263.2 625.3L1265.7 615.2L1267.2 597.7L1269.0 607.7L1270.8 616.5L1272.8 626.5L1274.8 595.2L1276.5 590.2L1278.3 602.7L1280.3 614.0L1282.8 624.0L1285.3 612.7L1287.3 614.0L1289.0 598.9L1291.6 595.2L1293.3 592.7L1294.8 571.4L1296.6 577.6L1297.8 586.4L1299.8 561.4L1302.3 551.3L1304.1 548.8L1306.6 547.6L1308.3 562.6L1310.4 563.9L1312.4 560.1L1314.1 567.6L1315.9 591.4L1317.9 572.6L1319.9 565.1L1321.6 538.8L1324.1 531.3L1325.9 538.8L1327.9 537.5L1330.4 542.6L1333.4 537.5L1334.9 562.6L1336.2 592.7L1337.9 612.7L1339.9 609.0L1342.4 612.7L1344.2 620.3L1345.9 612.7L1347.9 625.3L1349.9 607.7L1351.7 585.2L1353.5 595.2L1355.5 612.7L1357.5 625.3L1360.0 632.8L1361.7 636.5L1364.2 625.3L1366.0 602.7L1367.5 595.2L1369.2 605.2L1371.0 598.9L1372.5 615.2L1374.3 630.3L1376.0 597.7L1378.0 585.2L1379.3 580.2L1381.0 595.2L1383.0 615.2L1385.0 621.5L1386.8 610.2L1388.5 591.4L1390.6 620.3L1392.6 627.8L1394.3 615.2L1396.1 610.2L1397.6 631.5L1399.3 652.8L1400.6 667.4L1402.6 652.8L1404.3 644.1L1406.8 650.3L1409.3 649.1L1411.9 641.6L1414.4 645.3L1416.9 630.3L1419.4 626.5L1421.9 640.3L1423.6 642.8L1425.6 607.7L1427.6 587.7L1429.4 580.2L1431.4 573.9L1433.2 585.2L1434.4 612.7L1435.7 625.3L1437.7 602.7L1439.4 627.8L1441.2 641.6L1443.2 625.3L1445.7 616.5L1447.7 622.8L1449.4 632.8L1451.2 620.3L1453.2 598.9L1455.2 602.7L1457.0 642.8L1458.7 622.8L1460.7 619.0L1462.7 614.0L1464.5 615.2L1465.7 635.3L1468.2 636.5L1470.3 647.8L1472.0 667.9L1473.8 660.4L1475.3 656.6L1477.0 665.4L1479.5 665.4L1482.0 675.4L1484.5 687.9L1485.8 660.4L1487.8 656.6L1490.3 642.8L1492.8 632.8L1494.6 626.5L1496.3 636.5L1498.3 627.8L1500.3 620.3L1502.1 625.3L1505.3 629.0L1507.1 622.3" stroke="#7e57c2" stroke-width="1.05" fill="none" stroke-linejoin="round"/>
<path d="M11.3 662.9L13.8 657.9L18.8 656.6L23.8 652.4L28.8 651.6L33.8 644.1L37.6 640.3L41.4 630.3L45.1 621.5L48.9 612.8L52.6 599.0L56.4 590.2L60.2 584.7L63.9 585.2L68.9 589.0L73.9 593.2L78.9 597.2L84.0 601.5L86.5 602.7L90.2 600.2L94.0 597.7L99.0 602.7L104.0 607.8L109.0 609.8L112.8 614.0L115.8 622.8L118.3 627.1L121.6 625.3L125.3 617.8L129.1 607.8L132.8 597.7L136.6 585.2L139.8 570.2L142.9 558.9L145.9 555.1L149.1 554.6L152.9 557.6L156.6 566.4L160.4 577.7L164.2 581.4L167.4 587.7L170.4 590.7L175.4 587.7L180.5 585.7L185.0 583.9L189.2 589.0L193.0 592.2L196.7 602.7L200.5 614.0L204.3 622.8L208.0 629.1L211.8 633.3L215.5 631.6L219.3 627.8L223.1 622.8L226.8 619.0L230.6 616.5L234.3 612.8L238.1 605.3L241.9 597.7L245.6 589.0L249.4 578.9L253.1 571.4L256.9 565.2L260.7 561.4L265.7 562.6L270.7 563.9L275.7 564.6L280.7 563.4L287.0 560.1L292.0 561.4L297.0 561.4L302.0 557.6L307.0 552.6L312.0 555.1L315.8 556.4L320.8 563.9L325.8 572.7L329.6 581.4L333.3 590.2L337.1 591.0L340.9 593.2L347.1 592.2L350.9 594.7L355.9 599.0L360.9 605.3L365.9 614.0L370.9 622.8L375.9 631.6L381.0 637.8L386.0 641.1L391.0 640.3L396.0 639.1L398.8 627.8L402.5 610.2L406.3 595.2L410.1 587.7L415.1 583.9L419.6 582.2L422.6 585.7L426.3 595.2L430.1 610.2L433.9 621.5L437.1 624.0L441.4 621.5L446.4 616.5L451.4 609.0L456.4 600.2L461.4 592.7L465.2 588.9L468.9 585.2L472.7 587.2L477.7 591.4L482.7 596.4L487.2 600.2L490.3 607.7L494.0 616.5L497.8 621.5L501.5 626.5L505.3 635.3L509.0 647.8L512.8 656.6L517.8 662.9L522.8 669.1L527.1 672.9L530.4 670.4L535.4 662.9L540.4 654.1L545.4 646.6L549.1 642.8L552.9 630.3L556.7 617.7L560.4 606.5L564.2 597.7L566.7 593.9L570.5 591.4L574.2 586.4L576.7 590.2L580.5 600.2L584.2 609.0L588.0 619.0L591.8 625.3L595.5 632.8L600.0 638.3L604.3 635.3L608.0 632.8L611.8 633.3L615.6 629.8L619.3 626.5L623.1 625.3L626.8 622.3L630.6 619.5L634.4 625.3L638.1 635.3L641.9 644.1L645.6 655.3L649.4 667.9L651.9 680.4L654.4 687.9L658.2 692.9L661.9 694.9L665.7 692.9L669.4 689.2L673.2 682.9L677.0 676.6L680.7 672.4L685.7 671.6L690.8 672.9L695.8 674.9L699.5 670.4L703.3 662.9L707.0 654.1L710.8 645.3L714.6 637.8L718.3 625.3L722.1 607.7L725.8 597.7L729.6 587.7L733.4 576.4L737.1 566.4L740.9 560.1L743.9 561.4L748.4 566.4L752.2 573.9L755.9 581.4L759.7 588.9L762.2 592.2L765.9 588.9L769.7 584.7L773.5 581.4L777.2 575.1L779.7 568.9L782.2 565.6L785.5 566.4L788.0 571.4L791.3 587.7L795.0 602.7L798.8 616.5L802.6 625.3L807.6 627.8L811.3 625.3L815.1 617.7L818.8 609.0L822.6 601.5L826.4 596.4L830.1 593.9L833.9 590.9L837.1 588.2L841.4 590.2L844.7 596.4L848.2 605.2L852.2 611.5L855.2 622.8L858.9 636.5L862.7 647.8L866.5 655.3L870.2 658.6L873.2 657.3L877.2 657.8L880.3 652.8L884.0 644.1L887.3 637.8L891.5 637.8L895.3 636.5L899.0 639.8L902.8 642.3L906.6 646.6L910.3 649.8L914.1 649.1L917.8 652.8L921.6 656.1L925.4 654.1L930.4 652.1L935.4 649.1L940.4 644.1L944.2 632.8L947.9 625.3L952.9 617.7L957.9 612.7L963.0 608.2L968.0 606.0L973.0 604.0L978.0 602.7L983.0 601.5L989.3 599.7L994.3 601.0L1000.6 599.7L1005.6 602.2L1010.6 600.2L1015.6 593.9L1019.3 588.9L1024.4 586.4L1028.1 582.7L1030.1 580.7L1033.1 586.4L1035.6 592.7L1039.4 596.4L1043.2 596.4L1048.2 593.9L1053.2 592.7L1056.9 587.7L1059.4 585.2L1062.0 587.7L1065.7 596.4L1069.5 605.2L1073.2 610.2L1077.0 616.5L1080.8 625.3L1084.5 632.8L1088.3 636.5L1092.0 640.3L1095.8 642.3L1098.8 644.1L1102.1 637.8L1105.3 627.8L1108.3 615.2L1112.1 605.2L1115.8 600.7L1119.6 601.0L1123.4 602.7L1127.1 614.0L1130.9 622.8L1134.6 631.5L1137.9 636.5L1140.9 636.5L1144.7 634.8L1148.4 637.8L1152.2 641.6L1155.9 646.6L1159.7 649.1L1164.7 649.1L1168.5 648.6L1171.5 644.1L1174.7 631.5L1177.2 617.7L1181.3 595.2L1185.0 580.2L1188.8 568.9L1192.1 560.1L1193.8 557.6L1197.6 561.4L1201.3 564.6L1206.3 563.9L1211.4 567.6L1215.1 572.6L1218.9 577.1L1222.6 577.1L1226.4 578.9L1230.2 586.4L1233.9 592.7L1237.7 596.4L1242.7 597.2L1247.7 596.4L1251.5 595.2L1255.2 587.7L1259.0 584.7L1262.7 588.2L1267.7 593.9L1272.8 598.9L1277.3 600.2L1281.5 606.5L1285.3 610.7L1289.0 609.0L1292.8 607.7L1297.8 601.5L1302.8 592.7L1307.8 580.2L1312.9 570.1L1317.9 565.1L1321.6 563.9L1326.6 557.6L1330.4 555.1L1334.2 553.8L1337.9 561.4L1342.9 567.6L1346.7 576.4L1350.5 586.4L1354.2 593.9L1358.0 606.5L1361.7 614.0L1365.5 615.2L1369.2 612.2L1373.0 610.2L1377.5 612.7L1381.8 609.7L1385.5 607.7L1389.3 605.2L1393.1 608.2L1396.8 612.2L1400.6 615.2L1404.3 625.3L1408.1 631.5L1411.9 636.5L1415.6 641.6L1420.6 643.3L1423.1 643.6L1426.9 635.3L1430.7 625.3L1434.4 618.2L1438.2 614.7L1443.2 614.0L1448.2 612.2L1452.0 614.0L1455.7 617.7L1458.2 621.5L1462.0 622.3L1465.7 620.8L1469.5 623.3L1473.3 627.8L1477.0 634.0L1480.8 644.1L1484.5 652.8L1487.8 657.8L1492.1 659.3L1495.8 657.3L1499.6 652.8L1503.3 646.6L1507.1 639.8" stroke="#fdd835" stroke-width="1.1" fill="none" stroke-linejoin="round"/>
</g>
</svg>
<div id="t"><div style="position:absolute;left:11px;top:9.9px;font-size:13.67px;color:#e4e4e4;font-weight:400;line-height:1;white-space:nowrap;-webkit-text-stroke:0.25px #e4e4e4;">trishacrypto7 created with TradingView.com, Oct 31, 2025 08:53 UTC</div><div style="position:absolute;left:20px;top:41.7px;font-size:12.7px;color:#d6d6d6;font-weight:400;line-height:1;white-space:nowrap;-webkit-text-stroke:0.18px #d6d6d6;letter-spacing:0.36px;">Solana / U.S. Dollar · 1h · Coinbase</div><div style="position:absolute;left:242px;top:41.7px;font-size:12.7px;color:#d6d6d6;font-weight:400;line-height:1;white-space:nowrap;-webkit-text-stroke:0.18px #d6d6d6;">O</div><div style="position:absolute;left:253px;top:41.7px;font-size:12.7px;color:#1fa58d;font-weight:400;line-height:1;white-space:nowrap;-webkit-text-stroke:0.18px #1fa58d;">185.32</div><div style="position:absolute;left:300px;top:41.7px;font-size:12.7px;color:#d6d6d6;font-weight:400;line-height:1;white-space:nowrap;-webkit-text-stroke:0.18px #d6d6d6;">H</div><div style="position:absolute;left:310.5px;top:41.7px;font-size:12.7px;color:#1fa58d;font-weight:400;line-height:1;white-space:nowrap;-webkit-text-stroke:0.18px #1fa58d;">186.21</div><div style="position:absolute;left:357px;top:41.7px;font-size:12.7px;color:#d6d6d6;font-weight:400;line-height:1;white-space:nowrap;-webkit-text-stroke:0.18px #d6d6d6;">L</div><div style="position:absolute;left:365.5px;top:41.7px;font-size:12.7px;color:#1fa58d;font-weight:400;line-height:1;white-space:nowrap;-webkit-text-stroke:0.18px #1fa58d;">184.53</div><div style="position:absolute;left:412px;top:41.7px;font-size:12.7px;color:#d6d6d6;font-weight:400;line-height:1;white-space:nowrap;-webkit-text-stroke:0.18px #d6d6d6;">C</div><div style="position:absolute;left:422px;top:41.7px;font-size:12.7px;color:#1fa58d;font-weight:400;line-height:1;white-space:nowrap;-webkit-text-stroke:0.18px #1fa58d;">186.09</div><div style="position:absolute;left:469px;top:41.7px;font-size:12.7px;color:#1fa58d;font-weight:400;line-height:1;white-space:nowrap;-webkit-text-stroke:0.18px #1fa58d;">+0.78 (+0.42%)</div><div style="position:absolute;left:20px;top:60.5px;font-size:12.7px;color:#d6d6d6;font-weight:400;line-height:1;white-space:nowrap;-webkit-text-stroke:0.18px #d6d6d6;letter-spacing:0.3px;">MA (30, close)</div><div style="position:absolute;left:114px;top:60.5px;font-size:12.7px;color:#2f8fe8;font-weight:400;line-height:1;white-space:nowrap;-webkit-text-stroke:0.18px #2f8fe8;">187.50</div><div style="position:absolute;left:20px;top:513.5px;font-size:12.7px;color:#d6d6d6;font-weight:400;line-height:1;white-space:nowrap;-webkit-text-stroke:0.18px #d6d6d6;letter-spacing:0.3px;">RSI (14, close)</div><div style="position:absolute;left:114px;top:513.5px;font-size:12.7px;color:#7e57c2;font-weight:400;line-height:1;white-space:nowrap;-webkit-text-stroke:0.18px #7e57c2;">47.01</div><div style="position:absolute;left:155px;top:513.5px;font-size:12.7px;color:#fdd835;font-weight:700;line-height:1;white-space:nowrap;">41.49</div><div style="position:absolute;left:1536px;top:58.5183px;font-size:13.8px;color:#bcbcbc;font-weight:400;line-height:1;white-space:nowrap;-webkit-text-stroke:0.32px #bcbcbc;transform:scaleY(1.04);transform-origin:0 85%;">240.00</div><div style="position:absolute;left:1536px;top:117.51829999999998px;font-size:13.8px;color:#bcbcbc;font-weight:400;line-height:1;white-space:nowrap;-webkit-text-stroke:0.32px #bcbcbc;transform:scaleY(1.04);transform-origin:0 85%;">230.00</div><div style="position:absolute;left:1536px;top:176.51829999999998px;font-size:13.8px;color:#bcbcbc;font-weight:400;line-height:1;white-space:nowrap;-webkit-text-stroke:0.32px #bcbcbc;transform:scaleY(1.04);transform-origin:0 85%;">220.00</div><div style="position:absolute;left:1536px;top:235.51829999999998px;font-size:13.8px;color:#bcbcbc;font-weight:400;line-height:1;white-space:nowrap;-webkit-text-stroke:0.32px #bcbcbc;transform:scaleY(1.04);transform-origin:0 85%;">210.00</div><div style="position:absolute;left:1536px;top:294.5183px;font-size:13.8px;color:#bcbcbc;font-weight:400;line-height:1;white-space:nowrap;-webkit-text-stroke:0.32px #bcbcbc;transform:scaleY(1.04);transform-origin:0 85%;">200.00</div><div style="position:absolute;left:1536px;top:413.5183px;font-size:13.8px;color:#bcbcbc;font-weight:400;line-height:1;white-space:nowrap;-webkit-text-stroke:0.32px #bcbcbc;transform:scaleY(1.04);transform-origin:0 85%;">180.00</div><div style="position:absolute;left:1536px;top:472.5183px;font-size:13.8px;color:#bcbcbc;font-weight:400;line-height:1;white-space:nowrap;-webkit-text-stroke:0.32px #bcbcbc;transform:scaleY(1.04);transform-origin:0 85%;">170.00</div><div style="position:absolute;left:1536px;top:512.5183000000001px;font-size:13.8px;color:#bcbcbc;font-weight:400;line-height:1;white-space:nowrap;-webkit-text-stroke:0.32px #bcbcbc;transform:scaleY(1.04);transform-origin:0 85%;">80.00</div><div style="position:absolute;left:1536px;top:575.5183000000001px;font-size:13.8px;color:#bcbcbc;font-weight:400;line-height:1;white-space:nowrap;-webkit-text-stroke:0.32px #bcbcbc;transform:scaleY(1.04);transform-origin:0 85%;">60.00</div><div style="position:absolute;left:1536px;top:700.5183000000001px;font-size:13.8px;color:#bcbcbc;font-weight:400;line-height:1;white-space:nowrap;-webkit-text-stroke:0.32px #bcbcbc;transform:scaleY(1.04);transform-origin:0 85%;">20.00</div><div style="position:absolute;left:65px;top:747.6569px;font-size:13.4px;color:#cfcfcf;font-weight:400;line-height:1;white-space:nowrap;-webkit-text-stroke:0.25px #cfcfcf;width:60px;text-align:center;">28</div><div style="position:absolute;left:193px;top:747.6569px;font-size:13.4px;color:#cfcfcf;font-weight:700;line-height:1;white-space:nowrap;width:60px;text-align:center;">Oct</div><div style="position:absolute;left:278px;top:747.6569px;font-size:13.4px;color:#cfcfcf;font-weight:400;line-height:1;white-space:nowrap;-webkit-text-stroke:0.25px #cfcfcf;width:60px;text-align:center;">3</div><div style="position:absolute;left:363px;top:747.6569px;font-size:13.4px;color:#cfcfcf;font-weight:400;line-height:1;white-space:nowrap;-webkit-text-stroke:0.25px #cfcfcf;width:60px;text-align:center;">5</div><div style="position:absolute;left:449px;top:747.6569px;font-size:13.4px;color:#cfcfcf;font-weight:400;line-height:1;white-space:nowrap;-webkit-text-stroke:0.25px #cfcfcf;width:60px;text-align:center;">7</div><div style="position:absolute;left:534px;top:747.6569px;font-size:13.4px;color:#cfcfcf;font-weight:400;line-height:1;white-space:nowrap;-webkit-text-stroke:0.25px #cfcfcf;width:60px;text-align:center;">9</div><div style="position:absolute;left:619px;top:747.6569px;font-size:13.4px;color:#cfcfcf;font-weight:400;line-height:1;white-space:nowrap;-webkit-text-stroke:0.25px #cfcfcf;width:60px;text-align:center;">11</div><div style="position:absolute;left:704px;top:747.6569px;font-size:13.4px;color:#cfcfcf;font-weight:400;line-height:1;white-space:nowrap;-webkit-text-stroke:0.25px #cfcfcf;width:60px;text-align:center;">13</div><div style="position:absolute;left:790px;top:747.6569px;font-size:13.4px;color:#cfcfcf;font-weight:400;line-height:1;white-space:nowrap;-webkit-text-stroke:0.25px #cfcfcf;width:60px;text-align:center;">15</div><div style="position:absolute;left:875px;top:747.6569px;font-size:13.4px;color:#cfcfcf;font-weight:400;line-height:1;white-space:nowrap;-webkit-text-stroke:0.25px #cfcfcf;width:60px;text-align:center;">17</div><div style="position:absolute;left:960px;top:747.6569px;font-size:13.4px;color:#cfcfcf;font-weight:400;line-height:1;white-space:nowrap;-webkit-text-stroke:0.25px #cfcfcf;width:60px;text-align:center;">19</div><div style="position:absolute;left:1045px;top:747.6569px;font-size:13.4px;color:#cfcfcf;font-weight:400;line-height:1;white-space:nowrap;-webkit-text-stroke:0.25px #cfcfcf;width:60px;text-align:center;">21</div><div style="position:absolute;left:1130px;top:747.6569px;font-size:13.4px;color:#cfcfcf;font-weight:400;line-height:1;white-space:nowrap;-webkit-text-stroke:0.25px #cfcfcf;width:60px;text-align:center;">23</div><div style="position:absolute;left:1216px;top:747.6569px;font-size:13.4px;color:#cfcfcf;font-weight:400;line-height:1;white-space:nowrap;-webkit-text-stroke:0.25px #cfcfcf;width:60px;text-align:center;">25</div><div style="position:absolute;left:1292px;top:747.6569px;font-size:13.4px;color:#cfcfcf;font-weight:400;line-height:1;white-space:nowrap;-webkit-text-stroke:0.25px #cfcfcf;width:60px;text-align:center;">27</div><div style="position:absolute;left:1377px;top:747.6569px;font-size:13.4px;color:#cfcfcf;font-weight:400;line-height:1;white-space:nowrap;-webkit-text-stroke:0.25px #cfcfcf;width:60px;text-align:center;">29</div><div style="position:absolute;left:1463px;top:747.6569px;font-size:13.4px;color:#cfcfcf;font-weight:400;line-height:1;white-space:nowrap;-webkit-text-stroke:0.25px #cfcfcf;width:60px;text-align:center;">31</div><div style="position:absolute;left:1527px;top:31px;width:58.3px;height:36.5px;background:#0f0f0f"></div><div style="position:absolute;left:1530.4px;top:34.3px;width:52.2px;height:29.5px;border:1.6px solid #353535;border-radius:5px;background:#0f0f0f;box-sizing:border-box"></div><div style="position:absolute;left:1541px;top:43.0183px;font-size:13.8px;color:#dbdbdb;font-weight:700;line-height:1;white-space:nowrap;transform:scaleX(0.84);transform-origin:0 50%;">USD</div><div style="position:absolute;left:1527px;top:355px;width:56px;height:19px;background:#2196f3;border-radius:2px"></div><div style="position:absolute;left:1537.5px;top:358.5569px;font-size:13.4px;color:#fff;font-weight:700;line-height:1;white-space:nowrap;">187.50</div><div style="position:absolute;left:1527px;top:375px;width:56px;height:19px;background:#089981;border-radius:2px"></div><div style="position:absolute;left:1537.5px;top:378.6569px;font-size:13.4px;color:#fff;font-weight:700;line-height:1;white-space:nowrap;">186.09</div><div style="position:absolute;left:1471px;top:375px;width:55px;height:19px;background:#089981;border-radius:2px"></div><div style="position:absolute;left:1475px;top:379.5183px;font-size:13.8px;color:#fff;font-weight:700;line-height:1;white-space:nowrap;transform:scaleX(0.81);transform-origin:0 50%;">SOLUSD</div><div style="position:absolute;left:1527px;top:613px;width:50px;height:19px;background:#7e57c2;border-radius:2px"></div><div style="position:absolute;left:1536.5px;top:616.6569px;font-size:13.4px;color:#fff;font-weight:700;line-height:1;white-space:nowrap;">47.01</div><div style="position:absolute;left:1527px;top:632px;width:50px;height:19px;background:#fdd835;border-radius:2px"></div><div style="position:absolute;left:1536.5px;top:635.6569px;font-size:13.4px;color:#141414;font-weight:400;line-height:1;white-space:nowrap;-webkit-text-stroke:0.18px #141414;">41.49</div><svg style="position:absolute;left:1488px;top:472px" width="40" height="30" viewBox="0 0 40 30">
<defs><clipPath id="fc"><circle cx="26.6" cy="14.7" r="9.3"/></clipPath></defs>
<path d="M9.7 11.4 A11.3 11.3 0 0 1 23.4 3.4" fill="none" stroke="#a24bcf" stroke-width="1.5"/>
<path d="M11.9 21.7 A11.3 11.3 0 0 0 23.4 25.4" fill="none" stroke="#a24bcf" stroke-width="1.5"/>
<path d="M7.4 12.6 L9.5 16.4 L13 18.5 L9.5 20.6 L7.4 24.4 L5.3 20.6 L1.8 18.5 L5.3 16.4Z" fill="#7c4dff"/>
<circle cx="26.6" cy="14.7" r="10.2" fill="#2a0d10"/>
<circle cx="26.3" cy="14.5" r="11.3" fill="none" stroke="#e23c48" stroke-width="1.8"/>
<g clip-path="url(#fc)"><rect x="17" y="5" width="20" height="20" fill="#ffffff"/>
<rect x="17" y="5" width="20" height="3.8" fill="#ef5a55"/><rect x="17" y="13.1" width="20" height="2.9" fill="#ef5a55"/><rect x="17" y="20.4" width="20" height="5" fill="#ef4f48"/>
<rect x="17" y="5" width="11.6" height="11" fill="#2f8fe8"/>
<g fill="#a8dcff"><rect x="19.6" y="7" width="1.7" height="1.7"/><rect x="22.6" y="7" width="1.7" height="1.7"/><rect x="25.6" y="7" width="1.7" height="1.7"/><rect x="19" y="10" width="1.7" height="1.7"/><rect x="22.3" y="10" width="1.7" height="1.7"/><rect x="25.6" y="10" width="1.7" height="1.7"/><rect x="19.6" y="13" width="1.7" height="1.7"/><rect x="22.6" y="13" width="1.7" height="1.7"/><rect x="25.6" y="13" width="1.7" height="1.7"/></g>
</g></svg><div style="position:absolute;left:13.1px;top:795px;width:34px;height:17px">
<div style="position:absolute;left:0;top:0;width:13.8px;height:6.7px;background:#e0e0e3"></div>
<div style="position:absolute;left:6.9px;top:0;width:6.9px;height:16.7px;background:#e0e0e3"></div>
<div style="position:absolute;left:16.1px;top:-0.6px;width:6.3px;height:6.3px;border-radius:50%;background:#e0e0e3"></div>
<div style="position:absolute;left:19.7px;top:0;width:8.2px;height:16.7px;background:#e0e0e3;transform:skewX(-17.6deg);transform-origin:0 100%"></div>
</div><div style="position:absolute;left:55.1px;top:793.01515px;font-size:22.9px;color:#e0e0e3;font-weight:700;line-height:1;white-space:nowrap;letter-spacing:0.1px;">TradingView</div></div>
</body></html>
